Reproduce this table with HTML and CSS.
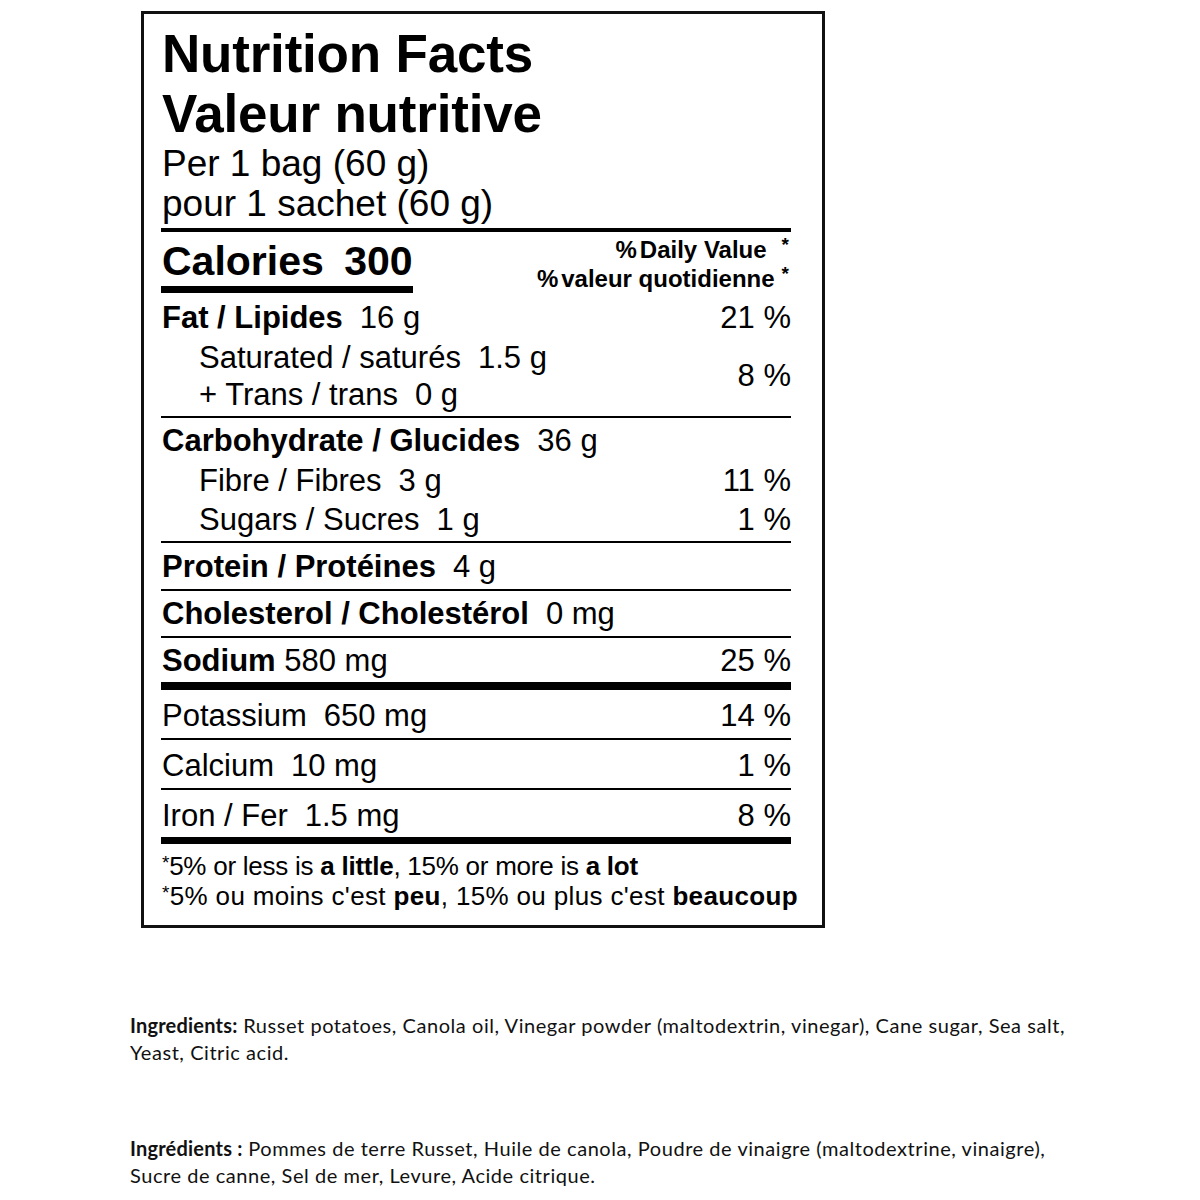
FILE: index.html
```html
<!DOCTYPE html>
<html lang="en">
<head>
<meta charset="utf-8">
<title>Nutrition Facts</title>
<link rel="stylesheet" href="styles.css">
</head>
<body>
<div class="label">
  <h1 class="title">Nutrition Facts<br>Valeur nutritive</h1>
  <p class="serving">Per 1 bag (60 g)<br>pour 1 sachet (60 g)</p>
  <div class="rule-med"></div>
  <div class="cal-row">
    <div class="calories">Calories <span class="cal-num">300</span></div>
    <div class="dv-head">
      <div class="dv-line"><span class="pc">%</span>Daily Value<span class="star s1">*</span></div>
      <div class="dv-line"><span class="pc">%</span>valeur quotidienne<span class="star s2">*</span></div>
    </div>
  </div>

  <div class="group g-fat">
    <div class="row r-fat"><span><b>Fat / Lipides</b><span class="amt">16 g</span></span><span class="pct">21 %</span></div>
    <div class="sub-block">
      <div class="sub-lines">
        <div class="sub-line">Saturated / saturés<span class="amt">1.5 g</span></div>
        <div class="sub-line">+ Trans / trans<span class="amt">0 g</span></div>
      </div>
      <span class="pct">8 %</span>
    </div>
  </div>

  <div class="group g-carb">
    <div class="row r-carb"><span><b>Carbohydrate / Glucides</b><span class="amt">36 g</span></span></div>
    <div class="row r-fibre sub"><span>Fibre / Fibres<span class="amt">3 g</span></span><span class="pct">11 %</span></div>
    <div class="row r-sugar sub"><span>Sugars / Sucres<span class="amt">1 g</span></span><span class="pct">1 %</span></div>
  </div>

  <div class="group g-protein">
    <div class="row r-protein"><span><b>Protein / Protéines</b><span class="amt">4 g</span></span></div>
  </div>

  <div class="group g-chol">
    <div class="row r-chol"><span><b>Cholesterol / Cholestérol</b><span class="amt">0 mg</span></span></div>
  </div>

  <div class="group g-sodium">
    <div class="row r-sodium"><span><b>Sodium</b> 580 mg</span><span class="pct">25 %</span></div>
  </div>

  <div class="group g-thin">
    <div class="row r-min"><span>Potassium<span class="amt">650 mg</span></span><span class="pct">14 %</span></div>
  </div>
  <div class="group g-thin">
    <div class="row r-min"><span>Calcium<span class="amt">10 mg</span></span><span class="pct">1 %</span></div>
  </div>
  <div class="group g-iron">
    <div class="row r-iron"><span>Iron / Fer<span class="amt">1.5 mg</span></span><span class="pct">8 %</span></div>
  </div>

  <div class="footnote">
    <div class="fn-line fn-en"><span class="fn-star">*</span>5% or less is <b>a little</b>, 15% or more is <b>a lot</b></div>
    <div class="fn-line fn-fr"><span class="fn-star">*</span>5% ou moins c'est <b>peu</b>, 15% ou plus c'est <b>beaucoup</b></div>
  </div>
</div>

<div class="ingredients">
  <p class="ing ing-en"><b class="ing-label">Ingredients:</b> <span>Russet potatoes, Canola oil, Vinegar powder (maltodextrin, vinegar), Cane sugar, Sea salt, Yeast, Citric acid.</span></p>
  <p class="ing ing-fr"><b class="ing-label">Ingrédients :</b> <span>Pommes de terre Russet, Huile de canola, Poudre de vinaigre (maltodextrine, vinaigre), Sucre de canne, Sel de mer, Levure, Acide citrique.</span></p>
</div>
</body>
</html>
```

FILE: styles.css
```css
html, body {
  margin: 0;
  padding: 0;
  background: #ffffff;
}

body {
  color: #000;
  font-family: "Liberation Sans", Arial, sans-serif;
}

.label {
  box-sizing: border-box;
  width: 684px;
  margin: 11px 0 0 141px;
  border: 3px solid #111;
  padding: 10px 31px 0 17px;
  height: 917px;
}

.title {
  margin: 0;
  font-size: 53px;
  font-weight: 700;
  line-height: 60px;
  padding-left: 1px;
  letter-spacing: -0.2px;
}

.serving {
  margin: 0;
  font-size: 37px;
  line-height: 40px;
  padding-left: 1px;
}

.rule-med {
  margin-top: 4px;
  height: 4px;
  background: #000;
}

.cal-row {
  height: 61px;
  display: flex;
  justify-content: space-between;
  align-items: flex-start;
}

.calories {
  margin-top: 9px;
  font-size: 41px;
  font-weight: 700;
  line-height: 41px;
  padding: 0 0 4px 1px;
  border-bottom: 7px solid #000;
  white-space: pre;
}

.cal-num {
  margin-left: 9px;
}

.dv-head {
  margin-top: 3px;
  font-size: 24px;
  font-weight: 700;
  line-height: 29px;
  text-align: right;
}

.dv-line {
  display: flex;
  justify-content: flex-end;
  align-items: flex-start;
}

.pc {
  margin-right: 3px;
}

.star {
  font-size: 19px;
  line-height: 19px;
  margin-right: 2px;
}

.s1 {
  margin-left: 15px;
}

.s2 {
  margin-left: 7px;
}

.group {
  border-bottom: 2px solid #000;
}

.row {
  box-sizing: border-box;
  display: flex;
  justify-content: space-between;
  align-items: center;
  font-size: 31px;
  line-height: 36px;
  padding-left: 1px;
}

.amt {
  margin-left: 17px;
}

.pct {
  font-size: 31px;
  white-space: pre;
}

.sub {
  padding-left: 38px;
}

.g-fat {
  padding: 4px 0 3px;
}

.r-fat {
  height: 42px;
}

.sub-block {
  display: flex;
  justify-content: space-between;
  align-items: center;
  height: 74px;
  font-size: 31px;
  padding-left: 38px;
}

.sub-line {
  height: 37px;
  line-height: 37px;
}

.g-carb {
  padding: 3px 0 2px;
}

.r-carb {
  height: 40px;
}

.r-fibre {
  height: 40px;
}

.r-sugar {
  height: 38px;
}

.r-protein {
  height: 46px;
  padding-top: 1px;
}

.r-chol {
  height: 45px;
}

.g-sodium {
  border-bottom-width: 8px;
}

.r-sodium {
  height: 44px;
  padding-top: 1px;
}

.r-min {
  height: 48px;
  padding-top: 4px;
}

.g-iron {
  border-bottom-width: 7px;
}

.r-iron {
  height: 47px;
  padding-top: 4px;
}

.footnote {
  padding-top: 7px;
  font-size: 26px;
  line-height: 30px;
  white-space: nowrap;
}

.fn-line {
  padding-left: 1px;
}

.fn-en {
  letter-spacing: -0.25px;
}

.fn-fr {
  letter-spacing: 0.35px;
}

.fn-star {
  font-size: 19px;
  vertical-align: 6px;
  line-height: 0;
}

.ingredients {
  margin: 84px 0 0 130px;
  width: 960px;
  font-family: Lato, "Open Sans", sans-serif;
  font-size: 20px;
  letter-spacing: 0.55px;
  line-height: 27px;
  color: #111;
}

.ing {
  margin: 0;
}

.ing-label {
  letter-spacing: 0.2px;
}

.ing-fr {
  margin-top: 69px;
}
```
